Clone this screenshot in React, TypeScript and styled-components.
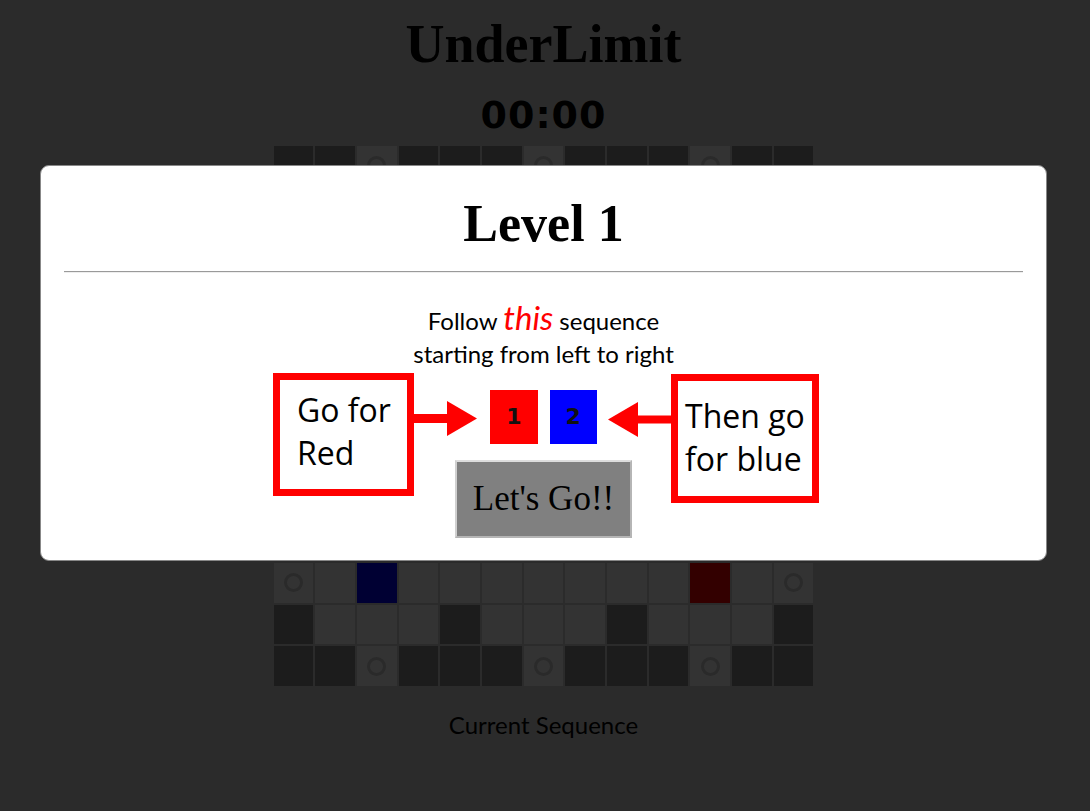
import React from "react";
import styled, { createGlobalStyle } from "styled-components";

// 13x13 board: d = wall, l = floor, c = floor with a coin, b / r = goal tiles
const BOARD = [
  "ddcdddcdddcdd",
  "dllldllldllld",
  "clrllllllblc",
  "dldldldldldld",
  "dllllllllllld",
  "dldlddlddldld",
  "clllllcllllll",
  "dldlddlddldld",
  "dllllllllllld",
  "dldldldldldld",
  "clblllllllrlc",
  "dllldllldllld",
  "ddcdddcdddcdd",
];

const GlobalStyle = createGlobalStyle`
  html, body {
    margin: 0;
    padding: 0;
  }
  body {
    background: #d7d7d7;
    color: #000;
    font-family: "Lato", sans-serif;
  }
`;

const Page = styled.div`
  display: flex;
  flex-direction: column;
  align-items: center;
  min-height: 100vh;
  padding: 13px 3px 0 0;
  box-sizing: border-box;
`;

const Title = styled.h1`
  margin: 0;
  font: bold 54px/62px "Liberation Serif", serif;
`;

const Timer = styled.div`
  margin-top: 18px;
  font: bold 38px/44px "DejaVu Sans", sans-serif;
  letter-spacing: 1px;
`;

const Board = styled.div`
  margin-top: 9px;
  display: grid;
  grid-template-columns: repeat(13, 1fr);
  grid-template-rows: repeat(13, 1fr);
  gap: 2px;
  width: 540px;
  height: 540px;
`;

const tileColors: Record<string, string> = {
  d: "#8c8c8c",
  l: "#ffffff",
  c: "#ffffff",
  b: "#0000ff",
  r: "#ff0000",
};

const Tile = styled.div<{ $kind: string }>`
  display: flex;
  align-items: center;
  justify-content: center;
  background: ${(p) => tileColors[p.$kind] || tileColors.l};
`;

const Coin = styled.span`
  width: 13px;
  height: 13px;
  border: 3px solid #cfcfcf;
  border-radius: 50%;
`;

const Caption = styled.div`
  margin-top: 24px;
  font: 24px/30px "Lato", sans-serif;
`;

const Overlay = styled.div`
  position: fixed;
  inset: 0;
  background: rgba(0, 0, 0, 0.8);
  padding: 165px 3px 0 0;
  box-sizing: border-box;
`;

const Modal = styled.div`
  position: relative;
  width: 1007px;
  margin: 0 auto;
  padding: 28px 23px 22px;
  box-sizing: border-box;
  display: flex;
  flex-direction: column;
  align-items: center;
  background: #fff;
  border: 1px solid #888;
  border-radius: 9px;
`;

const Heading = styled.h2`
  margin: 0;
  font: bold 52px/60px "Liberation Serif", serif;
`;

const Divider = styled.hr`
  align-self: stretch;
  margin: 17px 0 0;
  border: 0;
  border-top: 1px solid #9a9a9a;
  border-bottom: 1px solid #eee;
`;

const Instructions = styled.p`
  margin: 31px 0 0;
  text-align: center;
  font: 24px/33px "Lato", sans-serif;
`;

const Emph = styled.em`
  color: #f00;
  font-size: 33px;
  line-height: 0;
`;

const Sequence = styled.div`
  display: flex;
  gap: 12px;
  margin-top: 20px;
`;

const Step = styled.div<{ $color: string }>`
  padding: 15px 16px;
  background: ${(p) => p.$color};
  font: bold 22px/24px "DejaVu Sans", sans-serif;
  color: #111;
`;

const GoButton = styled.button`
  margin-top: 16px;
  padding: 17px 16px;
  background: #808080;
  border: 2px solid;
  border-color: #ddd #b5b5b5 #b5b5b5 #d0d0d0;
  font: 35px/40px "Liberation Serif", serif;
  color: #000;
`;

const Callout = styled.div<{ $left: number; $top: number; $w: number; $h: number; $pad: string }>`
  position: absolute;
  left: ${(p) => p.$left}px;
  top: ${(p) => p.$top}px;
  width: ${(p) => p.$w}px;
  height: ${(p) => p.$h}px;
  padding: ${(p) => p.$pad};
  box-sizing: border-box;
  background: #fff;
  border: 7px solid #f00;
  font: 32px/43px "Open Sans", sans-serif;
  white-space: nowrap;
`;

const Arrow = styled.svg<{ $left: number; $top: number }>`
  position: absolute;
  left: ${(p) => p.$left}px;
  top: ${(p) => p.$top}px;
`;

export default function App() {
  return (
    <>
      <GlobalStyle />
      <Page>
        <Title>UnderLimit</Title>
        <Timer>00:00</Timer>
        <Board>
          {BOARD.map((row, r) =>
            row
              .padEnd(13, "l")
              .split("")
              .map((kind, c) => (
                <Tile key={`${r}-${c}`} $kind={kind}>
                  {kind === "c" && <Coin />}
                </Tile>
              ))
          )}
        </Board>
        <Caption>Current Sequence</Caption>
      </Page>

      <Overlay>
        <Modal>
          <Heading>Level 1</Heading>
          <Divider />
          <Instructions>
            Follow <Emph>this</Emph> sequence
            <br />
            starting from left to right
          </Instructions>
          <Sequence>
            <Step $color="#ff0000">1</Step>
            <Step $color="#0000ff">2</Step>
          </Sequence>
          <GoButton>Let's Go!!</GoButton>

          <Callout $left={232} $top={207} $w={141} $h={123} $pad="8px 0 0 17px">
            Go for
            <br />
            Red
          </Callout>
          <Arrow $left={372} $top={235} width="64" height="35" viewBox="0 0 64 35">
            <rect x="0" y="13" width="35" height="9" fill="#f00" />
            <polygon points="34,0 64,17.5 34,35" fill="#f00" />
          </Arrow>

          <Arrow $left={567} $top={236} width="63" height="35" viewBox="0 0 63 35">
            <polygon points="0,17.5 30,0 30,35" fill="#f00" />
            <rect x="29" y="13.5" width="34" height="8" fill="#f00" />
          </Arrow>
          <Callout $left={630} $top={208} $w={148} $h={129} $pad="13px 0 0 7px">
            Then go
            <br />
            for blue
          </Callout>
        </Modal>
      </Overlay>
    </>
  );
}
